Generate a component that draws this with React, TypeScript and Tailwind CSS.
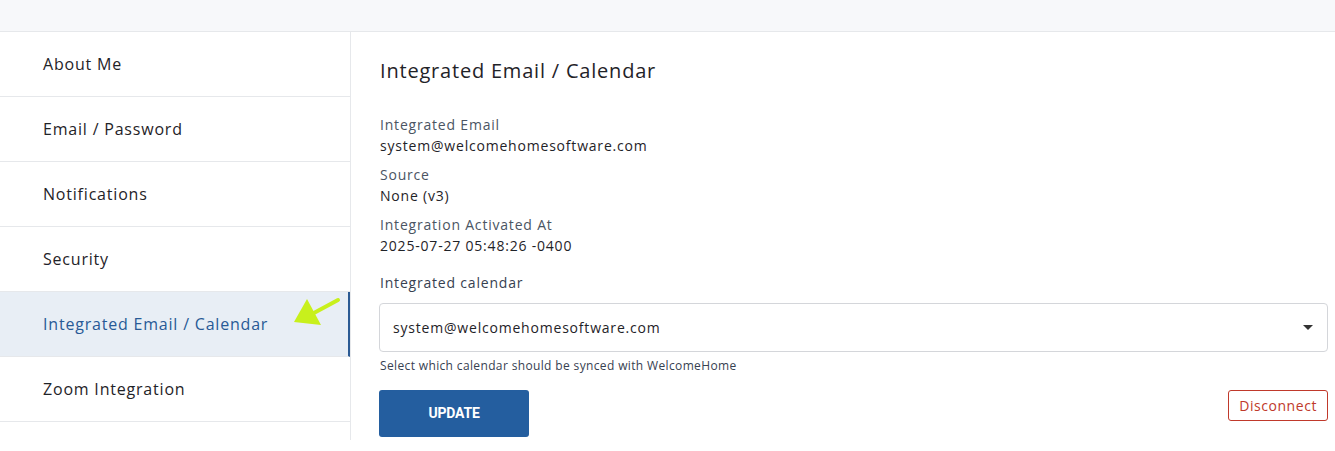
const navItems = [
  'About Me',
  'Email / Password',
  'Notifications',
  'Security',
  'Integrated Email / Calendar',
  'Zoom Integration',
]

const ACTIVE = 'Integrated Email / Calendar'

function Arrow() {
  return (
    <svg
      className="absolute left-[290px] top-[296px]"
      width="52"
      height="34"
      viewBox="290 296 52 34"
    >
      <path
        d="M338 300 L312 314"
        stroke="#c8f01c"
        strokeWidth="4"
        strokeLinecap="round"
      />
      <path d="M294 322 L307 299 L321 325 Z" fill="#c8f01c" />
    </svg>
  )
}

function InfoField({ label, value }: { label: string; value: string }) {
  return (
    <div className="leading-[21px]">
      <div className="text-[14px] text-[#4b5563]">{label}</div>
      <div className="text-[14px] text-[#1f2328]">{value}</div>
    </div>
  )
}

export default function App() {
  return (
    <div
      className="relative w-[1335px] h-[451px] bg-white text-[#1f2328] tracking-[0.05em]"
      style={{ fontFamily: '"Open Sans", "Noto Sans", sans-serif' }}
    >
      <div className="h-[32px] bg-[#f7f8fa] border-b border-[#e6e8eb]" />
      <div className="flex">
        <nav className="w-[351px] h-[408px] border-r border-[#e6e8eb] shrink-0">
          {navItems.map(item => {
            const active = item === ACTIVE
            return (
              <div
                key={item}
                className={
                  active
                    ? 'h-[65px] flex items-center pl-[43px] text-[16px] bg-[#e8eef5] text-[#285a96] border-r-2 border-[#2b5a93] border-b border-b-[#e6e8eb]'
                    : 'h-[65px] flex items-center pl-[43px] text-[16px] text-[#1f2328] border-b border-[#e6e8eb]'
                }
              >
                {item}
              </div>
            )
          })}
        </nav>
        <main className="flex-1 pl-[28px] pr-[7px] pt-[25px]">
          <h1 className="pl-px text-[20px] leading-[28px] text-[#1f2328]">
            Integrated Email / Calendar
          </h1>
          <div className="mt-[29px] pl-px flex flex-col gap-[8px]">
            <InfoField
              label="Integrated Email"
              value="system@welcomehomesoftware.com"
            />
            <InfoField label="Source" value="None (v3)" />
            <InfoField
              label="Integration Activated At"
              value="2025-07-27 05:48:26 -0400"
            />
          </div>
          <div className="mt-[17px] pl-px text-[14px] leading-[20px] text-[#374151]">
            Integrated calendar
          </div>
          <div className="mt-[10px] h-[49px] border border-[#d4d6da] rounded-[4px] flex items-center justify-between pl-[13px] pr-[14px]">
            <span className="text-[14px] text-[#1f2328]">
              system@welcomehomesoftware.com
            </span>
            <svg width="10" height="5" viewBox="0 0 10 5">
              <path d="M0 0 L10 0 L5 5 Z" fill="#333" />
            </svg>
          </div>
          <div className="mt-[6px] pl-px text-[12px] leading-[16px] text-[#374151] tracking-[0.03em]">
            Select which calendar should be synced with WelcomeHome
          </div>
          <div className="mt-[16px] flex items-start justify-between">
            <button
              className="w-[150px] h-[47px] bg-[#245e9f] text-white rounded-[3px] text-[14px] font-bold tracking-[-0.2px]"
              style={{ fontFamily: 'Roboto, sans-serif' }}
            >
              UPDATE
            </button>
            <button className="h-[31px] px-[10px] border border-[#c0392b] text-[#c0392b] rounded-[3px] text-[14px] tracking-[0.04em]">
              Disconnect
            </button>
          </div>
        </main>
      </div>
      <Arrow />
    </div>
  )
}
